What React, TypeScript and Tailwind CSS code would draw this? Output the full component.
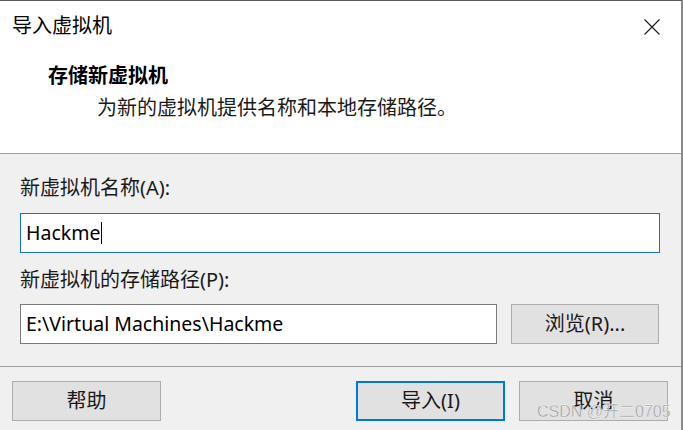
import React from "react";

const font = { fontFamily: '"Noto Sans", "Noto Sans CJK SC", sans-serif' } as React.CSSProperties;

export default function App() {
  return (
    <div
      className="relative w-[683px] h-[430px] overflow-hidden bg-[#f0f0f0] border-t border-[#5c5c5c] border-r-2 border-r-[#8a8a8a] text-black"
      style={font}
    >
      {/* header */}
      <div className="h-[152px] bg-white border-b border-[#a0a0a0] box-content">
        <div className="flex items-start justify-between pl-[12px] pr-[21px] pt-[11px]">
          <div className="text-[20px] leading-[28px]">导入虚拟机</div>
          <svg width="16" height="16" viewBox="0 0 16 16" className="mt-[7px]">
            <path d="M0.5 0.5 L15.5 15.5 M15.5 0.5 L0.5 15.5" stroke="#1a1a1a" strokeWidth="1.1" fill="none" />
          </svg>
        </div>
        <div className="pl-[48px] pt-[22px] text-[20px] leading-[28px] font-bold">存储新虚拟机</div>
        <div className="pl-[97px] pt-[4px] text-[20px] leading-[28px] text-[#1a1a1a]">
          为新的虚拟机提供名称和本地存储路径。
        </div>
      </div>

      {/* body */}
      <div className="px-[20px] pr-[22px] pt-[20px]">
        <div className="text-[20px] leading-[28px] text-[#1a1a1a]">新虚拟机名称(A):</div>
        <div className="mt-[11px] h-[40px] w-[640px] bg-white border border-[#1672c5] flex items-center pl-[5px]">
          <span className="text-[19.5px] leading-[28px]">Hackme</span>
          <span className="ml-[1px] w-px h-[22px] bg-black" />
        </div>
        <div className="mt-[13px] text-[20px] leading-[28px] text-[#1a1a1a]">新虚拟机的存储路径(P):</div>
        <div className="mt-[10px] flex gap-[14px]">
          <div className="h-[40px] w-[477px] bg-white border border-[#7a7a7a] flex items-center pl-[5px]">
            <span className="text-[19.5px] leading-[28px]">E:\Virtual Machines\Hackme</span>
          </div>
          <button className="h-[40px] w-[148px] bg-[#e1e1e1] border border-[#adadad] text-[20px] leading-[28px] text-[#1a1a1a]">
            浏览(R)...
          </button>
        </div>
      </div>

      <div className="mt-[22px] h-px bg-[#a0a0a0]" />

      {/* footer */}
      <div className="mt-[14px] flex pl-[12px]">
        <button className="h-[40px] w-[149px] bg-[#e1e1e1] border border-[#adadad] text-[20px] leading-[28px] text-[#1a1a1a]">
          帮助
        </button>
        <button className="ml-[195px] h-[40px] w-[149px] bg-[#e1e1e1] border-2 border-[#0078d7] text-[20px] leading-[28px] text-[#1a1a1a]">
          导入(I)
        </button>
        <button className="ml-[14px] h-[40px] w-[149px] bg-[#e1e1e1] border border-[#adadad] text-[20px] leading-[28px] text-[#1a1a1a]">
          取消
        </button>
      </div>

      {/* watermark */}
      <div
        className="absolute left-[537px] top-[401px] text-[16px] leading-[20px] text-[#9a9a9a] whitespace-nowrap"
        style={{ fontFamily: '"Liberation Sans", "Noto Sans CJK SC", sans-serif', WebkitTextStroke: "0.3px #ffffff" }}
      >
        CSDN @开二0705
      </div>
    </div>
  );
}
